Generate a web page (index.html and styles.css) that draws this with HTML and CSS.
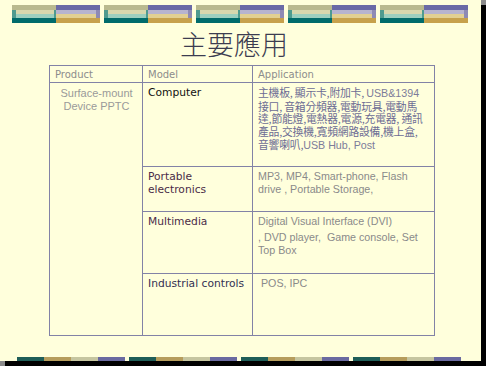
FILE: index.html
```html
<!DOCTYPE html>
<html lang="zh-Hant">
<head>
<meta charset="utf-8">
<title>主要應用</title>
<link rel="stylesheet" href="styles.css">
</head>
<body>
<div class="slide">
  <div class="banner">
    <div class="blk"><span class="lh"></span><span class="rh"></span></div>
    <div class="blk"><span class="lh"></span><span class="rh"></span></div>
    <div class="blk"><span class="lh"></span><span class="rh"></span></div>
    <div class="blk"><span class="lh"></span><span class="rh"></span></div>
    <div class="blk"><span class="lh"></span><span class="rh"></span></div>
  </div>
  <h1 class="title">主要應用</h1>
  <table class="apps">
    <colgroup><col class="c1"><col class="c2"><col class="c3"></colgroup>
    <tr class="head">
      <th>Product</th><th>Model</th><th>Application</th>
    </tr>
    <tr class="r1">
      <td class="prod" rowspan="4">Surface-mount<br>Device PPTC</td>
      <td class="model m-comp">Computer</td>
      <td class="app cjk">主機板, 顯示卡,附加卡, <span class="lat">USB&amp;1394</span><br>接口, 音箱分頻器,電動玩具,電動馬<br>達,節能燈,電熱器,電源,充電器, 通訊<br>產品,交換機,寬頻網路設備,機上盒,<br>音響喇叭,<span class="lat">USB Hub, Post</span></td>
    </tr>
    <tr class="r2">
      <td class="model">Portable<br>electronics</td>
      <td class="app">MP3, MP4, Smart-phone, Flash<br>drive , Portable Storage,</td>
    </tr>
    <tr class="r3">
      <td class="model">Multimedia</td>
      <td class="app"><p class="para">Digital Visual Interface (DVI)</p><p class="para">, DVD player,&nbsp; Game console, Set<br>Top Box</p></td>
    </tr>
    <tr class="r4">
      <td class="model m-ind">Industrial controls</td>
      <td class="app">&nbsp;POS, IPC</td>
    </tr>
  </table>
  <div class="footbar">
    <div class="grp"><span class="s1"></span><span class="s2"></span><span class="s3"></span><span class="s4"></span></div>
    <div class="grp"><span class="s1"></span><span class="s2"></span><span class="s3"></span><span class="s4"></span></div>
    <div class="grp"><span class="s1"></span><span class="s2"></span><span class="s3"></span><span class="s4"></span></div>
    <div class="grp"><span class="s1"></span><span class="s2"></span><span class="s3"></span><span class="s4"></span></div>
  </div>
</div>
</body>
</html>
```

FILE: styles.css
```css
html, body {
  margin: 0;
  padding: 0;
  background: #8a8a8a;
}
body {
  width: 486px;
  height: 366px;
  overflow: hidden;
}
.slide {
  width: 481px;
  height: 361px;
  background: #ffffdc;
  box-shadow: 5px 5px 0 #000;
  display: flex;
  flex-direction: column;
  font-family: "Liberation Sans", Arial, sans-serif;
}
.banner {
  display: flex;
  gap: 4px;
  padding: 5px 0 0 12px;
  height: 18px;
}
.blk {
  display: flex;
  width: 88px;
  height: 18px;
}
.lh, .rh {
  width: 44px;
  height: 18px;
  display: block;
}
.lh {
  background:
    linear-gradient(to bottom, transparent 0 5px, #d7d7ae 5px 9px, #9ccfbf 9px 13px, transparent 13px) 4px 0 / 38px 18px no-repeat,
    linear-gradient(to bottom, #b9b98f 0 5px, #4f9b8f 5px 13px, #006b6b 13px 18px);
}
.rh {
  background:
    linear-gradient(to bottom, transparent 0 5px, #b7b4cf 5px 9px, #e2d092 9px 13px, transparent 13px) 0 0 / 40px 18px no-repeat,
    linear-gradient(to bottom, #6a6aa6 0 5px, #8e8ab4 5px 13px, #c7a14c 13px 18px);
}
.title {
  margin: 3px 0 0 0;
  padding-left: 180px;
  height: 39px;
  font-family: "Noto Sans CJK TC", "Noto Sans CJK SC", sans-serif;
  font-weight: 300;
  font-size: 27px;
  line-height: 36px;
  color: #3c3c50;
  letter-spacing: 0;
}
.apps {
  margin: 0 0 0 49px;
  border-collapse: collapse;
  width: 385px;
  table-layout: fixed;
  border: 1px solid #8282a6;
  font-size: 11px;
  line-height: 13px;
}
.c1 { width: 93px; }
.c2 { width: 110px; }
.c3 { width: 182px; }
.apps th, .apps td {
  border: 1px solid #8282a6;
  vertical-align: top;
  text-align: left;
  padding: 3px 4px 0 5px;
}
.apps th {
  font-weight: normal;
  color: #8c8c8c;
  font-family: "DejaVu Sans", Verdana, sans-serif;
  font-size: 10px;
  padding-top: 2px;
}
.head { height: 17px; }
.r1 { height: 84px; }
.r2 { height: 45px; }
.r3 { height: 62px; }
.r4 { height: 62px; }
.prod {
  text-align: center !important;
  color: #9a9a9a;
  padding-top: 4px !important;
}
.model {
  font-family: "DejaVu Sans", Verdana, sans-serif;
  font-size: 10.7px;
  color: #4a2c48;
}
.m-comp { color: #111; }
.m-ind { color: #323052; }
.app {
  color: #8a8a8a;
  font-size: 10.7px;
}
.cjk {
  font-family: "Noto Sans CJK TC", "Noto Sans CJK SC", sans-serif;
  color: #6c6c94;
  font-size: 10.8px;
  line-height: 12.7px;
  white-space: nowrap;
  letter-spacing: -0.2px;
}
.lat {
  font-family: "Liberation Sans", Arial, sans-serif;
  color: #7c7c9a;
  letter-spacing: 0;
  font-size: 10.7px;
}
.para {
  margin: 0 0 3px 0;
}
.footbar {
  margin-top: auto;
  display: flex;
  gap: 4px;
  padding-left: 17px;
  height: 4px;
}
.grp {
  display: flex;
  height: 4px;
}
.grp span {
  display: block;
  width: 27px;
  height: 4px;
}
.s1 { background: #1f5e58; }
.s2 { background: #b69d5c; }
.s3 { background: #c6c6a0; }
.s4 { background: #6a6aa0; }
```
